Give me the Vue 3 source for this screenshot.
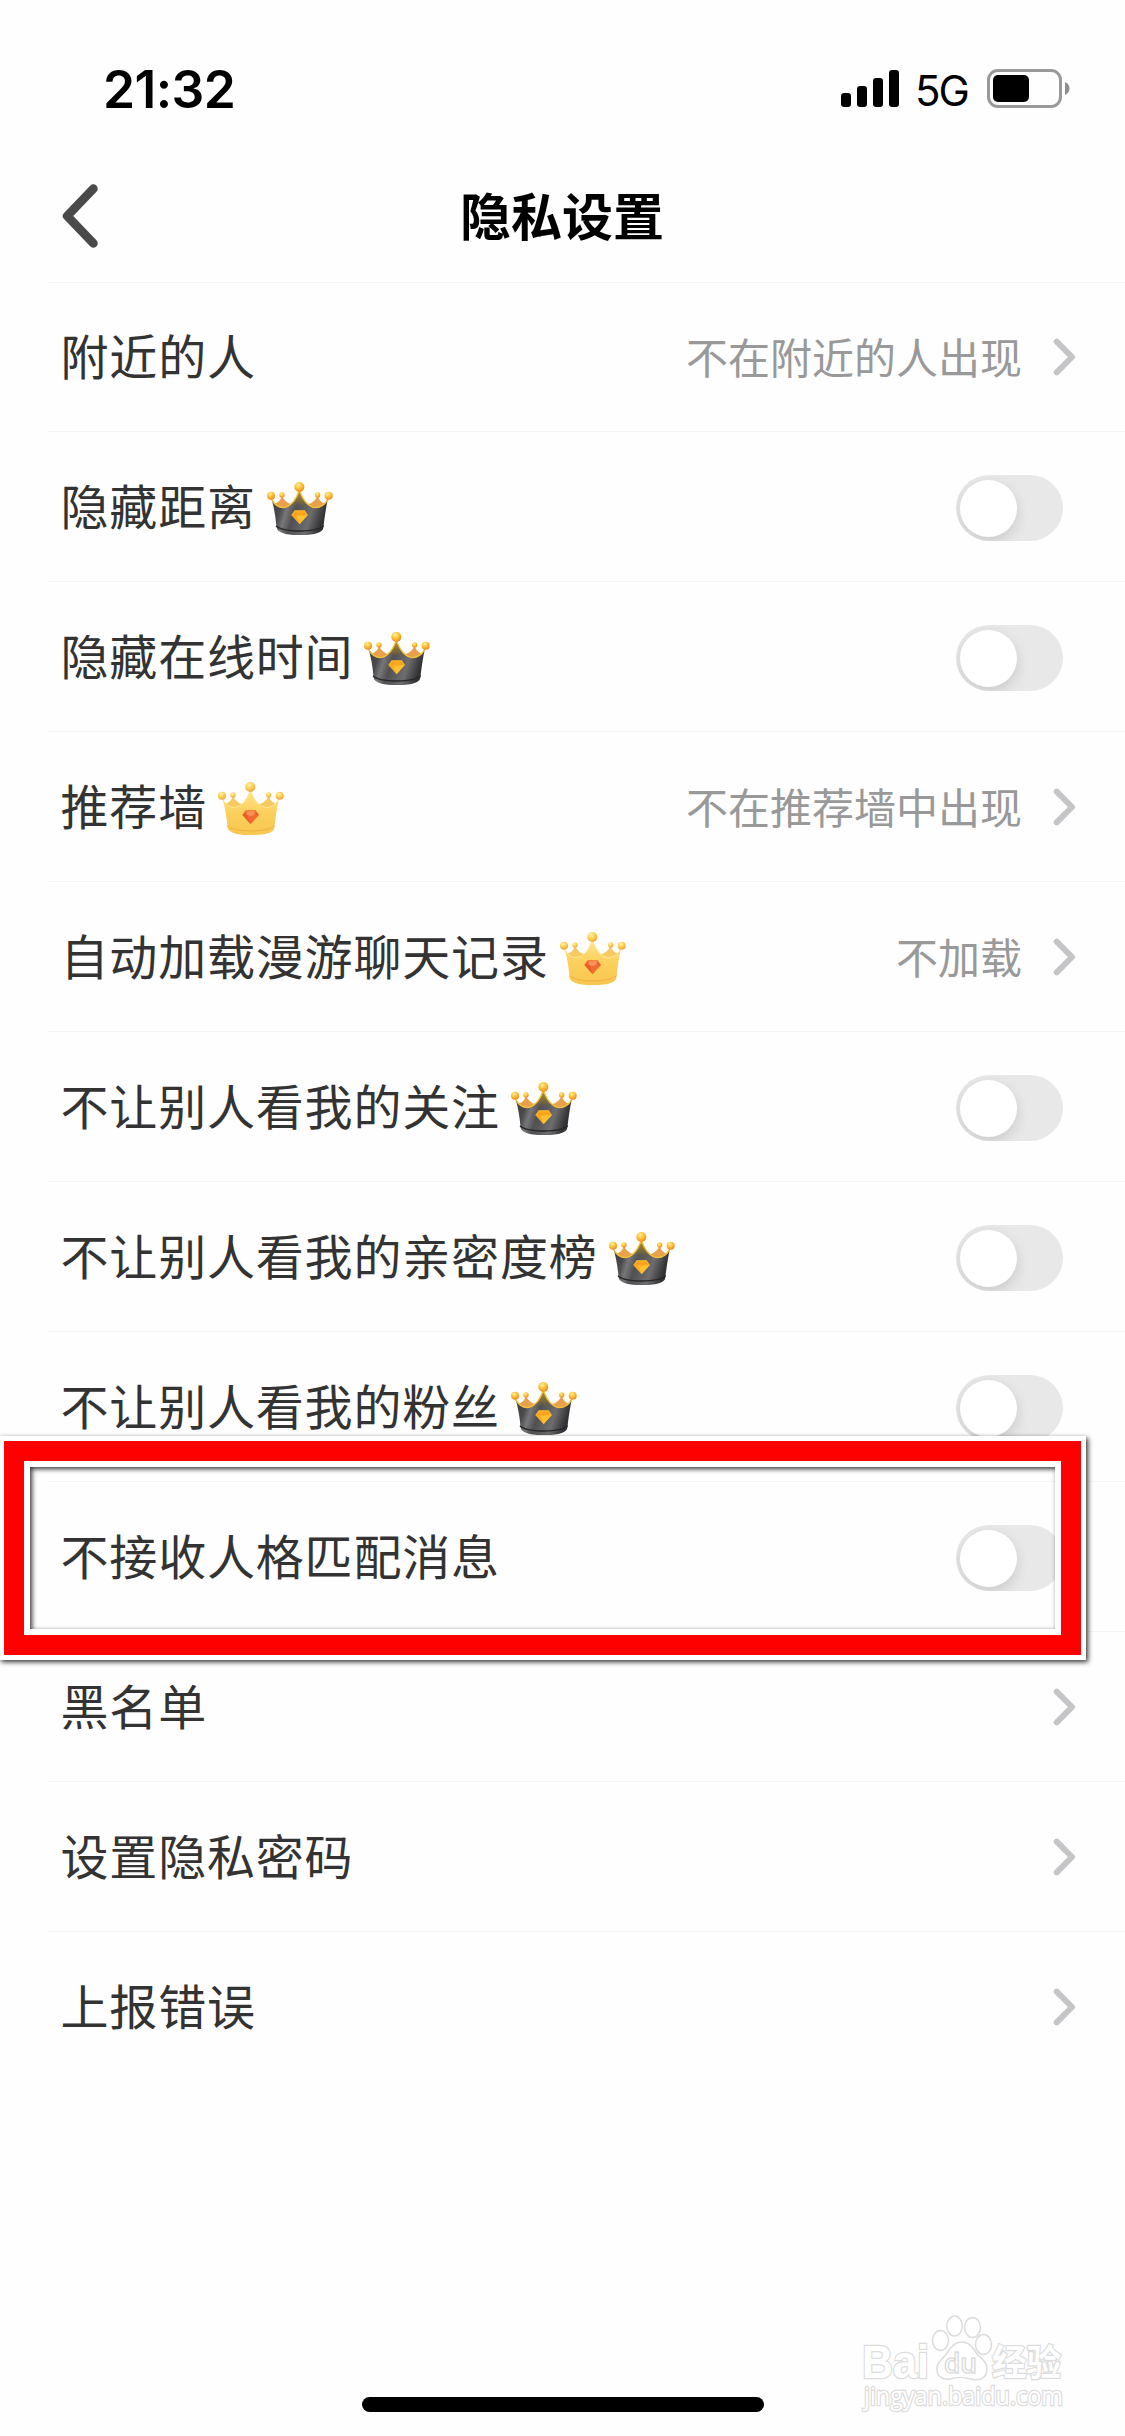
<script setup>
const rows = [
  { label: '附近的人', value: '不在附近的人出现' },
  { label: '隐藏距离', crown: 'dark', toggle: true },
  { label: '隐藏在线时间', crown: 'dark', toggle: true },
  { label: '推荐墙', crown: 'gold', value: '不在推荐墙中出现' },
  { label: '自动加载漫游聊天记录', crown: 'gold', value: '不加载' },
  { label: '不让别人看我的关注', crown: 'dark', toggle: true },
  { label: '不让别人看我的亲密度榜', crown: 'dark', toggle: true },
  { label: '不让别人看我的粉丝', crown: 'dark', toggle: true },
  { label: '不接收人格匹配消息', toggle: true },
  { label: '黑名单' },
  { label: '设置隐私密码' },
  { label: '上报错误' },
]
</script>

<template>
  <div class="screen">
    <svg class="defs" width="0" height="0" aria-hidden="true">
      <defs>
        <radialGradient id="ball" cx="0.4" cy="0.3" r="0.7">
          <stop offset="0" stop-color="#fff0a0" />
          <stop offset="0.45" stop-color="#ffc83c" />
          <stop offset="1" stop-color="#f08a1c" />
        </radialGradient>
        <radialGradient id="ballGold" cx="0.4" cy="0.3" r="0.7">
          <stop offset="0" stop-color="#fff3b8" />
          <stop offset="0.5" stop-color="#ffd254" />
          <stop offset="1" stop-color="#eba63a" />
        </radialGradient>
        <linearGradient id="darkBody" x1="0" x2="1" y1="0" y2="0.25">
          <stop offset="0" stop-color="#3c3c3e" />
          <stop offset="0.25" stop-color="#4a4a4c" />
          <stop offset="0.36" stop-color="#77777a" />
          <stop offset="0.5" stop-color="#505052" />
          <stop offset="0.78" stop-color="#6d6d70" />
          <stop offset="1" stop-color="#333335" />
        </linearGradient>
        <linearGradient id="darkPeak" x1="0" x2="0" y1="0" y2="1">
          <stop offset="0" stop-color="#c89a28" />
          <stop offset="0.38" stop-color="#8c7430" stop-opacity="0.6" />
          <stop offset="0.6" stop-color="#555555" stop-opacity="0" />
        </linearGradient>
        <linearGradient id="goldBody" x1="0" x2="0" y1="0" y2="1">
          <stop offset="0" stop-color="#ffe48a" />
          <stop offset="0.5" stop-color="#fbd05c" />
          <stop offset="1" stop-color="#f8c64e" />
        </linearGradient>
      </defs>
    </svg>

    <header class="status">
      <span class="time">21:32</span>
      <div class="indicators">
        <svg class="signal" width="58" height="37" viewBox="0 0 58 37">
          <rect x="0" y="23" width="10" height="14" rx="3.2" />
          <rect x="16" y="16" width="10" height="21" rx="3.2" />
          <rect x="32" y="8" width="10" height="29" rx="3.2" />
          <rect x="48" y="0" width="10" height="37" rx="3.2" />
        </svg>
        <span class="network">5G</span>
        <svg class="battery" width="83" height="39" viewBox="0 0 83 39">
          <rect x="1.5" y="1.5" width="72" height="36" rx="9.5" fill="none" stroke="#999" stroke-width="3" />
          <rect x="6" y="6" width="36" height="27" rx="5" fill="#000" />
          <path d="M78 13c3 1.200 4.500 3.800 4.500 6.500s-1.500 5.300-4.500 6.500z" fill="#8e8e8e" />
        </svg>
      </div>
    </header>

    <nav class="nav">
      <svg class="back" width="40" height="64" viewBox="0 0 40 64">
        <path d="M33.300 4.700L7.200 32l26.100 27.300" fill="none" stroke="#4a4a4a" stroke-width="8.800" stroke-linecap="round" stroke-linejoin="round" />
      </svg>
      <h1 class="title">隐私设置</h1>
    </nav>

    <ul class="list">
      <li v-for="row in rows" :key="row.label" class="row">
        <span class="label">{{ row.label }}</span>
        <svg v-if="row.crown" class="crown" :class="row.crown" viewBox="33 35 198 161">
          <path class="back-peak" d="M55 100Q72 96 78 76Q86 96 108 102L98 116H70zM208 100Q191 96 185 76Q177 96 154 102L164 116H194z" />
          <path class="body" d="M46 84Q60 112 82 113Q112 110 130 60Q148 110 178 113Q202 112 216 84Q208 120 202 172Q200 194 131 194Q66 194 62 172Q57 120 46 84z" />
          <path v-if="row.crown === 'dark'" d="M82 113Q112 110 130 60Q148 110 178 113L160 150H104z" fill="url(#darkPeak)" />
          <path class="rim" d="M47 88Q60 111 82 112Q112 109 130 60Q148 109 178 112Q202 111 215 88" />
          <path class="band" d="M60 166Q74 181 131 182Q188 181 203 166" />
          <g class="balls">
            <circle cx="78" cy="74" r="8" />
            <circle cx="185" cy="74" r="8" />
            <circle cx="45" cy="76" r="12" />
            <circle cx="218" cy="76" r="12" />
            <circle cx="130" cy="50" r="15" />
          </g>
          <path class="gem" d="M116 120H146L156 134L131 162L106 134z" />
          <path class="facet" d="M118 123H144L148 132L131 137L114 132z" />
          <path class="shade" d="M106 134L118 122L121 135L131 162zM156 134L144 122L141 135z" />
        </svg>
        <div class="trailing">
          <span v-if="row.value" class="value">{{ row.value }}</span>
          <span v-if="row.toggle" class="toggle"><i class="knob"></i></span>
          <svg v-else class="chevron" width="24" height="38" viewBox="0 0 24 38">
            <path d="M4.700 3.700L20 19L4.700 34.300" fill="none" stroke="#c5c5c7" stroke-width="6" stroke-linecap="round" stroke-linejoin="round" />
          </svg>
        </div>
      </li>
    </ul>

    <div class="highlight"><div class="highlight-red"><div class="highlight-inner"></div></div></div>

    <svg class="watermark" width="216" height="106" viewBox="0 0 216 106">
      <g fill="#fff" stroke="#dcdcdc" stroke-width="1.500">
        <g class="wm-text">
          <text class="wm-brand" x="3" y="65" textLength="67" lengthAdjust="spacingAndGlyphs">Bai</text>
          <text class="wm-cn" x="133" y="63" textLength="69" lengthAdjust="spacingAndGlyphs">经验</text>
          <text class="wm-url" x="5" y="92" textLength="199" lengthAdjust="spacingAndGlyphs">jingyan.baidu.com</text>
        </g>
        <ellipse cx="81.500" cy="27.500" rx="8" ry="10" />
        <ellipse cx="95.500" cy="13" rx="7.700" ry="10" />
        <ellipse cx="113.500" cy="14.500" rx="8" ry="10" />
        <ellipse cx="124.500" cy="31.500" rx="8" ry="10" />
        <path d="M102 29C111 29 115 36 118 41C123 46 129 50 128 57C127 66 119 68 112 66C106 64 97 64 91 66C84 67 77 64 78 54C79 48 85 45 88 40C91 35 95 29 102 29z" />
        <text class="wm-du" x="85" y="60" textLength="33" lengthAdjust="spacingAndGlyphs">du</text>
      </g>
    </svg>

    <div class="home"></div>
  </div>
</template>

<style>
html,
body {
  margin: 0;
  background: #fefefe;
}
</style>

<style scoped>
.screen {
  position: relative;
  width: 1125px;
  height: 2436px;
  overflow: hidden;
  background: #fefefe;
  font-family: "Noto Sans CJK SC", sans-serif;
}
.defs {
  position: absolute;
}
.status {
  box-sizing: border-box;
  height: 150px;
  padding: 27px 55px 0 103px;
  display: flex;
  align-items: center;
  justify-content: space-between;
  font-family: Inter, sans-serif;
  color: #000;
}
.time {
  font-size: 51.500px;
  font-weight: 600;
  line-height: 60px;
  letter-spacing: -0.600px;
}
.indicators {
  display: flex;
  align-items: center;
  height: 42px;
}
.network {
  width: 53px;
  margin: 4px 19px 0 16px;
  font-size: 42px;
  line-height: 46px;
  font-weight: 400;
  letter-spacing: -2px;
}
.nav {
  height: 132px;
  display: grid;
  grid-template-columns: 120px 1fr 120px;
  align-items: center;
}
.back {
  margin-left: 60px;
}
.title {
  margin: -4px 1px 0 0;
  font-size: 51px;
  line-height: 74px;
  font-weight: 700;
  text-align: center;
  color: #000;
}
.list {
  list-style: none;
  margin: 0 0 0 48px;
  padding: 0;
  border-top: 1px solid #f5f5f5;
}
.row {
  box-sizing: border-box;
  height: 150px;
  padding: 0 49px 0 12.500px;
  display: flex;
  align-items: center;
  border-bottom: 1px solid #f5f5f5;
}
.row:first-child {
  height: 149px;
}
.row:last-child {
  border-bottom: 0;
}
.label {
  margin-bottom: 6px;
  font-size: 48px;
  line-height: 70px;
  letter-spacing: 0.820px;
  color: #333;
  white-space: nowrap;
}
.crown {
  width: 66px;
  height: 53.700px;
  margin: 4px 0 0 11px;
}
.dark .body { fill: url(#darkBody); }
.dark .rim { fill: none; stroke: #f2c33c; stroke-width: 4; }
.dark .band { fill: none; stroke: #262628; stroke-width: 4; }
.dark .balls { fill: url(#ball); }
.dark .back-peak { fill: #e8a04a; }
.dark .gem { fill: #ffc22e; }
.dark .facet { fill: #ffa51c; }
.dark .shade { fill: #f08c14; opacity: 0.450; }
.gold .body { fill: url(#goldBody); }
.gold .rim { fill: none; stroke: #ffe896; stroke-width: 3; }
.gold .band { fill: none; stroke: #efb240; stroke-width: 3; }
.gold .balls { fill: url(#ballGold); }
.gold .back-peak { fill: #f6c961; }
.gold .gem { fill: #f26a30; }
.gold .facet { fill: #f89258; }
.gold .shade { fill: #d94f1c; opacity: 0.450; }
.trailing {
  margin-left: auto;
  display: flex;
  align-items: center;
}
.value {
  margin: 0 30px 2px 0;
  font-size: 42px;
  line-height: 60px;
  color: #999;
  white-space: nowrap;
}
.toggle {
  box-sizing: border-box;
  width: 107px;
  height: 66px;
  margin: 3px 13px 0 0;
  padding: 4.500px 4px;
  border-radius: 33px;
  background: #e8e8e8;
  overflow: hidden;
}
.knob {
  display: block;
  width: 57px;
  height: 57px;
  border-radius: 50%;
  background: #fff;
  box-shadow: 0 5px 14px rgba(0, 0, 0, 0.130);
}
.highlight {
  position: absolute;
  box-sizing: border-box;
  left: -1px;
  top: 1436px;
  width: 1087px;
  height: 224px;
  border: 5.500px solid #fff;
  filter: drop-shadow(2px 2px 2.500px rgba(0, 0, 0, 0.800));
}
.highlight-red {
  box-sizing: border-box;
  height: 100%;
  border: 20px solid #f00;
}
.highlight-inner {
  box-sizing: border-box;
  height: 100%;
  border: 6px solid #fff;
}
.watermark {
  position: absolute;
  left: 859px;
  top: 2313px;
  overflow: visible;
}
.wm-text {
  paint-order: stroke;
  stroke-width: 2.500px;
}
.wm-brand {
  font: 700 47px "Liberation Sans", sans-serif;
}
.wm-cn {
  font: 700 36px "Noto Sans CJK SC", sans-serif;
}
.wm-url {
  font: 400 25px "Open Sans", sans-serif;
}
.wm-du {
  font: 600 27px "Open Sans", sans-serif;
}
.home {
  position: absolute;
  left: 362px;
  top: 2397px;
  width: 402px;
  height: 15px;
  border-radius: 8px;
  background: #000;
}
</style>
